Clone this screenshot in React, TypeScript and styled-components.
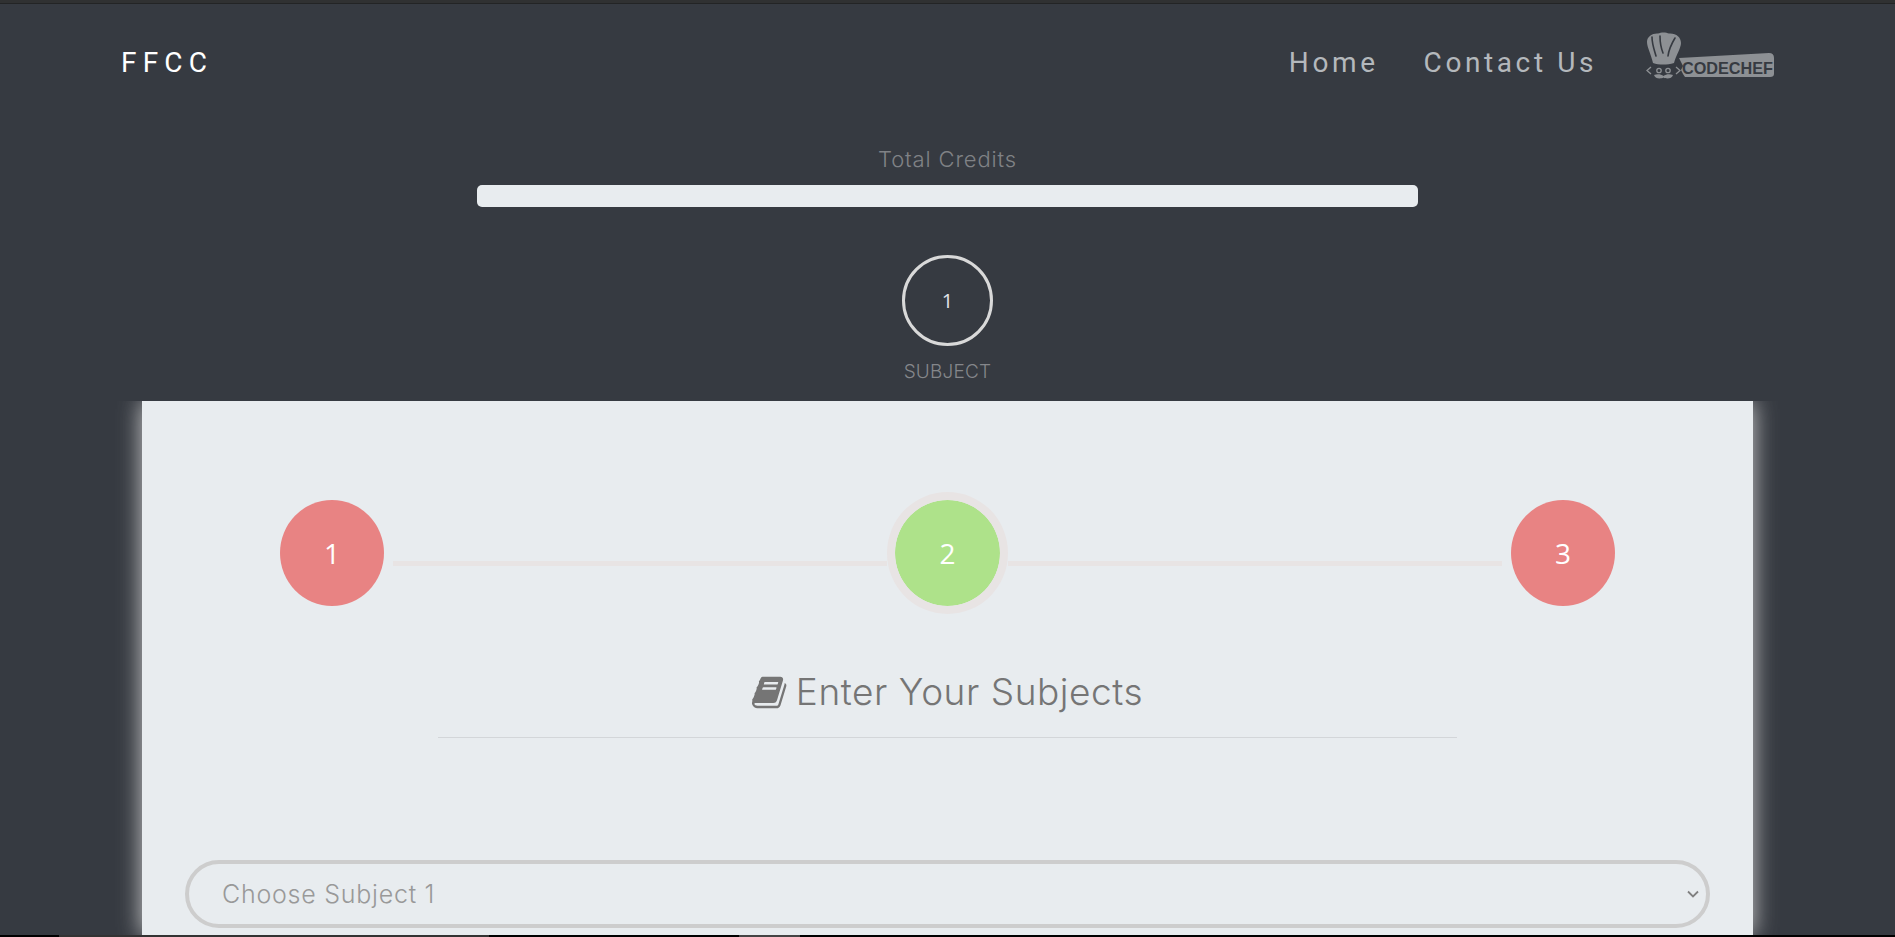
import React from "react";
import styled, { createGlobalStyle } from "styled-components";

const Global = createGlobalStyle`
  html, body { margin: 0; padding: 0; height: 100%; overflow: hidden; background: #363a41; }
  * { box-sizing: border-box; }
`;

const Page = styled.div`
  height: 937px;
  display: flex;
  flex-direction: column;
  background: #363a41;
  font-family: Inter, "Open Sans", sans-serif;
`;

const TopStrip = styled.div`
  height: 4px;
  flex: none;
  background: #303132;
  border-bottom: 1px solid #232425;
`;

const Main = styled.main`
  flex: 1;
  min-height: 0;
  display: flex;
  flex-direction: column;
  overflow: hidden;
`;

const Header = styled.header`
  position: relative;
  z-index: 1;
  background: #363a41;
  flex: none;
`;

const Nav = styled.nav`
  display: flex;
  align-items: flex-start;
  justify-content: space-between;
  height: 143px;
  padding: 28px 120px 0;
`;

const Brand = styled.a`
  font-family: Roboto, sans-serif;
  font-size: 28px;
  line-height: 62px;
  letter-spacing: 6.2px;
  color: #fff;
  padding-left: 1px;
`;

const NavRight = styled.div`
  display: flex;
  align-items: flex-start;
`;

const NavLink = styled.a`
  font-family: Roboto, sans-serif;
  font-size: 28px;
  line-height: 62px;
  letter-spacing: 3.6px;
  white-space: nowrap;
  color: #b4b8bc;
  margin-right: 45px;
`;

const LogoMark = styled.svg`
  display: block;
  width: 130px;
  height: 48px;
  margin-left: 3px;
`;

const Progress = styled.section`
  display: flex;
  flex-direction: column;
  align-items: center;
  padding-bottom: 17px;
`;

const CreditsTitle = styled.div`
  font-size: 22px;
  line-height: 24px;
  font-weight: 300;
  letter-spacing: 0.85px;
  color: #808286;
`;

const CreditsBar = styled.div`
  width: 941px;
  height: 22px;
  margin-top: 14px;
  border-radius: 5px;
  background: #e8ecef;
`;

const PhaseCircle = styled.div`
  width: 91px;
  height: 91px;
  margin-top: 48px;
  border: 3px solid #d9d9d9;
  border-radius: 50%;
  display: flex;
  align-items: center;
  justify-content: center;
  font-family: "Open Sans", sans-serif;
  font-size: 20px;
  color: #e0e4e8;
`;

const PhaseLabel = styled.div`
  margin-top: 14px;
  font-size: 19px;
  line-height: 24px;
  font-weight: 300;
  letter-spacing: 0.2px;
  color: #85878b;
`;

const Card = styled.section`
  flex: 1;
  margin: 0 142px;
  padding-top: 91px;
  background: #e8ecef;
  box-shadow: 0 0 22px #cccccc;
`;

const Stepper = styled.div`
  display: flex;
  align-items: flex-start;
  margin: 0 130px;
`;

const Step = styled.div<{ $active?: boolean }>`
  flex: none;
  width: ${(p) => (p.$active ? 121 : 120)}px;
  height: 122px;
  border: 8px solid ${(p) => (p.$active ? "#e8e4e4" : "transparent")};
  border-radius: 50%;
  background: ${(p) => (p.$active ? "#aee28a" : "#e88383")};
  background-clip: padding-box;
  display: flex;
  align-items: center;
  justify-content: center;
  font-family: "Open Sans", sans-serif;
  font-size: 28px;
  color: #fff;

  &:first-child {
    margin-right: 1px;
  }

  &:last-child {
    margin-left: 1px;
  }
`;

const StepLine = styled.div`
  flex: 1;
  height: 5px;
  margin-top: 69px;
  background: #e8e4e4;
`;

const Heading = styled.h2`
  display: flex;
  align-items: center;
  justify-content: center;
  margin: 53px 0 0;
  font-size: 37px;
  line-height: 50px;
  font-weight: 300;
  letter-spacing: 0.55px;
  color: #757575;
`;

const BookIcon = styled.svg`
  width: 37px;
  height: 37px;
  margin-right: 7px;
  fill: #757575;
`;

const Rule = styled.hr`
  width: 1019px;
  height: 1px;
  margin: 20px auto 0;
  border: 0;
  background: #d3d6d9;
`;

const SelectBox = styled.div`
  display: flex;
  align-items: center;
  justify-content: space-between;
  height: 68px;
  margin: 122px 43px 0;
  padding: 0 7px 0 33px;
  border: 4px solid #cdcdcd;
  border-radius: 34px;
  font-size: 25px;
  font-weight: 300;
  letter-spacing: 0.75px;
  color: #999;
`;

const Chevron = styled.svg`
  width: 12px;
  height: 8px;
  fill: none;
  stroke: #808080;
  stroke-width: 1.8;
`;

const BottomStrip = styled.div`
  height: 2px;
  flex: none;
  display: flex;
  background: #000;
`;

const StripSegment = styled.div<{ $w: number; $c: string }>`
  width: ${(p) => p.$w}px;
  background: ${(p) => p.$c};
`;

const strip = [
  { w: 59, c: "#000" },
  { w: 430, c: "#333" },
  { w: 250, c: "#000" },
  { w: 61, c: "#444" },
];

const Logo = () => (
  <LogoMark viewBox="0 0 130 48" aria-label="CodeChef">
    <path
      fill="#8d9094"
      d="M8 31 C6 22 2 15 2 10 C2 4 8 1 13 1.5 C16 0 21 0 24 1.5 C31 1 36 5 36 11 C36 16 31 23 29 31 C22 33 14 33 8 31 Z"
    />
    <path
      fill="none"
      stroke="#363a41"
      strokeWidth="1.6"
      strokeLinecap="round"
      d="M7 5 C7 12 9 17 11 24 M15 4 C15 11 16 16 18 21 M30 6 C27 11 24 16 23 24"
    />
    <path fill="#8d9094" d="M34 26 L124 21 Q129 21 129 26 L129 42 Q129 45 125 45 L40 45 L38 42 L36 38 L38 34 Z" />
    <text
      x="37"
      y="41.5"
      textLength="91"
      lengthAdjust="spacingAndGlyphs"
      fontFamily="'Liberation Sans', sans-serif"
      fontWeight="700"
      fontSize="17"
      fill="#363a41"
    >
      CODECHEF
    </text>
    <g fill="none" stroke="#8d9094" strokeWidth="1.3">
      <path d="M6 35 L2 38.5 L6 42" />
      <path d="M31 35 L35 38.5 L31 42" />
      <circle cx="14" cy="38.5" r="2.2" />
      <circle cx="23" cy="38.5" r="2.2" />
    </g>
    <path fill="#8d9094" d="M9 43 C12 42 16 42 18.5 44 C21 42 25 42 28 43 C27 47 21 47 18.5 45.5 C16 47 10 47 9 43 Z" />
  </LogoMark>
);

export default function App() {
  return (
    <Page>
      <Global />
      <TopStrip />
      <Main>
        <Header>
          <Nav>
            <Brand>FFCC</Brand>
            <NavRight>
              <NavLink>Home</NavLink>
              <NavLink>Contact Us</NavLink>
              <Logo />
            </NavRight>
          </Nav>
          <Progress>
            <CreditsTitle>Total Credits</CreditsTitle>
            <CreditsBar />
            <PhaseCircle>1</PhaseCircle>
            <PhaseLabel>SUBJECT</PhaseLabel>
          </Progress>
        </Header>
        <Card>
          <Stepper>
            <Step>1</Step>
            <StepLine />
            <Step $active>2</Step>
            <StepLine />
            <Step>3</Step>
          </Stepper>
          <Heading>
            <BookIcon viewBox="0 0 1792 1792">
              <path d="M1639 478q40 57 18 129l-275 906q-19 64-76.5 107.5t-122.5 43.5h-923q-77 0-148.5-53.5t-99.5-131.5q-24-67-2-127 0-4 3-27t4-37q1-8-3-21.5t-3-19.5q2-11 8-21t16.5-23.5 16.5-23.5q23-38 45-91.5t30-91.5q3-10 .5-30t-.5-28q3-11 17-28t17-23q21-36 42-92t25-90q1-9-2.5-32t.5-28q4-13 22-30.5t22-22.5q19-26 42.5-84.5t27.5-96.5q1-8-3-25.5t-2-26.5q2-8 9-18t18-23 17-21q8-12 16.5-30.5t15-35 16-36 19.5-32 26.5-23.5 36-11.5 47.5 5.5l-1 3q38-9 51-9h761q74 0 114 56t18 130l-274 906q-36 119-71.5 153.5t-128.5 34.5h-869q-27 0-38 15-11 16-1 43 24 70 144 70h923q29 0 56-15.5t35-41.5l300-987q7-22 5-57 38 15 59 43zm-1064 2q-4 13 2 22.5t20 9.5h608q13 0 25.5-9.5t16.5-22.5l21-64q4-13-2-22.5t-20-9.5h-608q-13 0-25.5 9.5t-16.5 22.5zm-83 256q-4 13 2 22.5t20 9.5h608q13 0 25.5-9.5t16.5-22.5l21-64q4-13-2-22.5t-20-9.5h-608q-13 0-25.5 9.5t-16.5 22.5z" />
            </BookIcon>
            Enter Your Subjects
          </Heading>
          <Rule />
          <SelectBox>
            Choose Subject 1
            <Chevron viewBox="0 0 12 8">
              <path d="M1 1.5 L6 6.5 L11 1.5" />
            </Chevron>
          </SelectBox>
        </Card>
      </Main>
      <BottomStrip>
        {strip.map((s, i) => (
          <StripSegment key={i} $w={s.w} $c={s.c} />
        ))}
      </BottomStrip>
    </Page>
  );
}
